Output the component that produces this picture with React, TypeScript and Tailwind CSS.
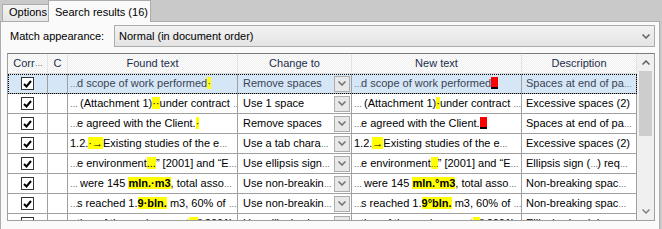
import React from "react";

type Seg = { t?: string; hl?: boolean; b?: boolean; red?: boolean };

type Row = {
  found: Seg[];
  change: string;
  next: Seg[];
  desc: string;
};

const rows: Row[] = [
  {
    found: [{ t: "…d scope of work performed" }, { t: "·", hl: true }],
    change: "Remove spaces",
    next: [{ t: "…d scope of work performed" }, { red: true }],
    desc: "Spaces at end of pa…",
  },
  {
    found: [{ t: "… (Attachment 1)" }, { t: "··", hl: true }, { t: "under contract …" }],
    change: "Use 1 space",
    next: [{ t: "… (Attachment 1)" }, { t: "·", hl: true }, { t: "under contract …" }],
    desc: "Excessive spaces (2)",
  },
  {
    found: [{ t: "…e agreed with the Client." }, { t: "·", hl: true }],
    change: "Remove spaces",
    next: [{ t: "…e agreed with the Client." }, { red: true }],
    desc: "Spaces at end of pa…",
  },
  {
    found: [{ t: "1.2." }, { t: "·→", hl: true }, { t: "Existing studies of the e…" }],
    change: "Use a tab chara…",
    next: [{ t: "1.2." }, { t: "→", hl: true }, { t: "Existing studies of the e…" }],
    desc: "Excessive spaces (2)",
  },
  {
    found: [{ t: "…e environment" }, { t: "...", hl: true }, { t: "” [2001] and “E…" }],
    change: "Use ellipsis sign…",
    next: [{ t: "…e environment" }, { t: "…", hl: true }, { t: "” [2001] and “E…" }],
    desc: "Ellipsis sign (…) req…",
  },
  {
    found: [{ t: "… were 145 " }, { t: "mln.·m3", hl: true, b: true }, { t: ", total asso…" }],
    change: "Use non-breakin…",
    next: [{ t: "… were 145 " }, { t: "mln.°m3", hl: true, b: true }, { t: ", total asso…" }],
    desc: "Non-breaking spac…",
  },
  {
    found: [{ t: "…s reached 1." }, { t: "9·bln.", hl: true, b: true }, { t: " m3, 60% of …" }],
    change: "Use non-breakin…",
    next: [{ t: "…s reached 1." }, { t: "9°bln.", hl: true, b: true }, { t: " m3, 60% of …" }],
    desc: "Non-breaking spac…",
  },
  {
    found: [{ t: "…tion of the environment" }, { t: "...", hl: true }, { t: "” 2001)" }],
    change: "Use ellipsis sign…",
    next: [{ t: "…tion of the environment" }, { t: "…", hl: true }, { t: "” 2001)" }],
    desc: "Ellipsis sign (…) req…",
  },
];

// the grid's font draws "…" narrow, so shrink it here
const txt = (s: string) =>
  s.split("…").map((part, i) => (
    <React.Fragment key={i}>
      {i > 0 && <span className="text-[8px] tracking-[-1px]">…</span>}
      {part}
    </React.Fragment>
  ));

const Chevron = ({ up = false, color = "#606060" }: { up?: boolean; color?: string }) => (
  <svg width="8" height="5" viewBox="0 0 8 5">
    <path
      d={up ? "M0.5 4.5 L4 1 L7.5 4.5" : "M0.5 0.5 L4 4 L7.5 0.5"}
      fill="none"
      stroke={color}
      strokeWidth="1.5"
    />
  </svg>
);

const Segs = ({ segs }: { segs: Seg[] }) => (
  <span className="whitespace-pre">
    {segs.map((s, i) =>
      s.red ? (
        <span
          key={i}
          className="inline-block w-[7px] h-[12px] bg-[#ff0000] border-b-2 border-black align-[-2px]"
        />
      ) : (
        <span
          key={i}
          className={`${s.hl ? "bg-[#ffff00]" : ""} ${s.b ? "font-bold" : ""}`}
        >
          {txt(s.t ?? "")}
        </span>
      )
    )}
  </span>
);

const CheckBox = () => (
  <span className="w-[13px] h-[13px] border border-[#333333] bg-white flex items-center justify-center">
    <svg width="9" height="8" viewBox="0 0 9 8">
      <path d="M1 4 L3.5 6.5 L8 1" fill="none" stroke="#000" strokeWidth="2" />
    </svg>
  </span>
);

const headCell =
  "flex items-center justify-center border-r border-[#e4e4e4] text-[#1c2d4c] overflow-hidden whitespace-nowrap";
const cell =
  "flex items-center border-r border-[#a0a0a0] overflow-hidden whitespace-nowrap";

export default function App() {
  return (
    <div className="w-[662px] h-[229px] bg-[#c9c9c9] overflow-hidden font-['Liberation_Sans',Arial,sans-serif] text-[11px] text-black">
      {/* tabs */}
      <div className="flex items-end h-[21px] pl-[2px]">
        <div className="h-[17px] w-[47px] border border-b-0 border-[#acacac] bg-gradient-to-b from-[#f3f3f3] to-[#e6e6e6] flex items-center pl-[6px] pb-[1px]">
          Options
        </div>
        <div className="relative z-10 h-[22px] w-[103px] -mb-[1px] border border-b-0 border-[#acacac] bg-[#fafafa] flex items-start pt-[3px] pl-[6px] -ml-[1px]">
          Search results (16)
        </div>
      </div>

      {/* panel */}
      <div className="w-[660px] h-[210px] border border-[#acacac] bg-[#fafafa] pt-[3px]">
        <div className="flex items-center h-[22px]">
          <span className="pl-[9px] w-[113px]">Match appearance:</span>
          <div className="w-[541px] h-[22px] border border-[#acacac] bg-gradient-to-b from-[#f2f2f2] to-[#e4e4e4] flex items-center justify-between pl-[4px] pr-[4px]">
            <span>Normal (in document order)</span>
            <Chevron />
          </div>
        </div>

        <div className="mt-[6px] ml-[6px] w-[648px] h-[168px] border border-[#a0a0a0] border-t-[#7a7a7a] bg-white flex overflow-hidden">
          <div className="w-[629px] flex flex-col">
            <div className="grid grid-cols-[40px_20px_170px_114px_170px_115px] h-[20px] shrink-0 border-b border-[#d8d8d8] bg-[repeating-conic-gradient(#eeeeee_0%_25%,#ffffff_0%_50%)] bg-[length:2px_2px]">
              <div className={headCell}>{txt("Corr…")}</div>
              <div className={headCell}>C</div>
              <div className={headCell}>Found text</div>
              <div className={headCell}>Change to</div>
              <div className={headCell}>New text</div>
              <div className={headCell}>Description</div>
            </div>

            {rows.map((r, i) => {
              const sel = i === 0;
              return (
                <div
                  key={i}
                  className={`grid grid-cols-[40px_20px_170px_114px_170px_115px] h-[20px] shrink-0 border-b border-[#a0a0a0] ${
                    sel
                      ? "bg-[#d5e6f7] text-[#3b4452] outline-1 outline-dotted outline-black -outline-offset-1"
                      : ""
                  }`}
                >
                  <div className={`${cell} justify-center`}>
                    <CheckBox />
                  </div>
                  <div className={cell} />
                  <div className={`${cell} pl-[2px]`}>
                    <Segs segs={r.found} />
                  </div>
                  <div className={`${cell} justify-between pl-[5px] pr-[1px]`}>
                    <span className="whitespace-pre">{txt(r.change)}</span>
                    <span className="w-[16px] h-[16px] shrink-0 border border-[#adadad] bg-[#e8e8e8] flex items-center justify-center">
                      <Chevron color="#707070" />
                    </span>
                  </div>
                  <div className={`${cell} pl-[2px]`}>
                    <Segs segs={r.next} />
                  </div>
                  <div className={`${cell} pl-[4px]`}>
                    <span className="whitespace-pre">{txt(r.desc)}</span>
                  </div>
                </div>
              );
            })}
          </div>

          {/* scrollbar */}
          <div className="w-[17px] bg-[#f0f0f0] flex flex-col">
            <div className="h-[17px] flex items-center justify-center">
              <Chevron up />
            </div>
            <div className="h-[65px] mx-[2px] bg-[#cdcdcd]" />
            <div className="flex-1" />
            <div className="h-[17px] flex items-center justify-center">
              <Chevron color="#808080" />
            </div>
          </div>
        </div>
      </div>
    </div>
  );
}
